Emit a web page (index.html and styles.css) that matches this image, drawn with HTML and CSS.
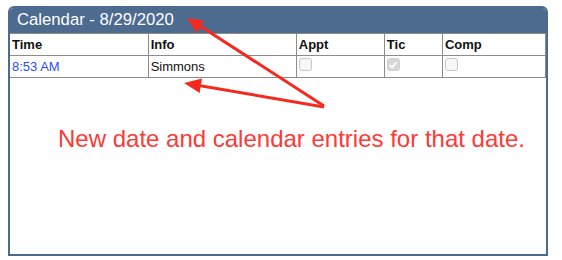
FILE: index.html
```html
<!DOCTYPE html>
<html>
<head>
<meta charset="utf-8">
<link rel="stylesheet" href="styles.css">
</head>
<body>
<div class="panel">
  <div class="panel-head">Calendar - 8/29/2020</div>
  <table class="cal">
    <colgroup>
      <col class="c-time"><col class="c-info"><col class="c-appt"><col class="c-tic"><col class="c-comp">
    </colgroup>
    <thead>
      <tr><th>Time</th><th>Info</th><th>Appt</th><th>Tic</th><th>Comp</th></tr>
    </thead>
    <tbody>
      <tr>
        <td class="time">8:53 AM</td>
        <td>Simmons</td>
        <td class="box"><span class="cb"></span></td>
        <td class="box"><span class="cb checked"><svg viewBox="0 0 12 12" width="12" height="12"><path d="M2.8 6.2 L5 8.4 L9.3 3.6" fill="none" stroke="#fff" stroke-width="1.8"/></svg></span></td>
        <td class="box"><span class="cb"></span></td>
      </tr>
    </tbody>
  </table>
  <p class="note">New date and calendar entries for that date.</p>
</div>
<svg class="arrows" width="562" height="260" viewBox="0 0 562 260">
  <line x1="324" y1="106" x2="197" y2="24" stroke="#f52a1f" stroke-width="3"/>
  <polygon points="187,18 204,20.5 196.5,33" fill="#f52a1f"/>
  <line x1="324" y1="107" x2="196" y2="85" stroke="#f52a1f" stroke-width="3"/>
  <polygon points="184,83 202,78.5 199.6,93" fill="#f52a1f"/>
</svg>
</body>
</html>
```
FILE: styles.css
```css
html, body {
  margin: 0;
  padding: 0;
  background: #fff;
  font-family: "Liberation Sans", Arial, sans-serif;
}
.panel {
  margin: 6px 0 0 8px;
  width: 540px;
  height: 250px;
  box-sizing: border-box;
  border: 2px solid #4d6a8f;
  border-radius: 6px 6px 0 0;
  overflow: hidden;
  background: #fff;
}
.panel-head {
  background: #4d6a8f;
  color: #fff;
  font-size: 16.7px;
  height: 25px;
  line-height: 24px;
  padding-left: 7px;
}
.cal {
  border-collapse: collapse;
  width: 536px;
  table-layout: fixed;
  font-size: 13px;
}
.c-time { width: 138px; }
.c-info { width: 148px; }
.c-appt { width: 88px; }
.c-tic { width: 58px; }
.c-comp { width: 103px; }
.cal th, .cal td {
  border: 1px solid #8c8c8c;
  height: 21px;
  padding: 0 2px;
  text-align: left;
  vertical-align: middle;
  color: #111;
}
.cal th {
  font-weight: bold;
}
.cal tr > :first-child { border-left: none; }
.cal td.time {
  color: #1f4fff;
}
.cal td.box {
  vertical-align: top;
  padding-top: 2px;
  height: 19px;
}
.cb {
  display: block;
  width: 11px;
  height: 11px;
  border: 1px solid #c6c6c6;
  border-radius: 3px;
  background: #f7f7f7;
}
.cb.checked {
  background: #d7d7d7;
  border-color: #d0d0d0;
}
.cb svg { display: block; margin: -0.5px; }
.note {
  margin: 47px 0 0 48px;
  color: #fc3a36;
  font-size: 24px;
}
.arrows {
  position: absolute;
  left: 0;
  top: 0;
  pointer-events: none;
}
```
